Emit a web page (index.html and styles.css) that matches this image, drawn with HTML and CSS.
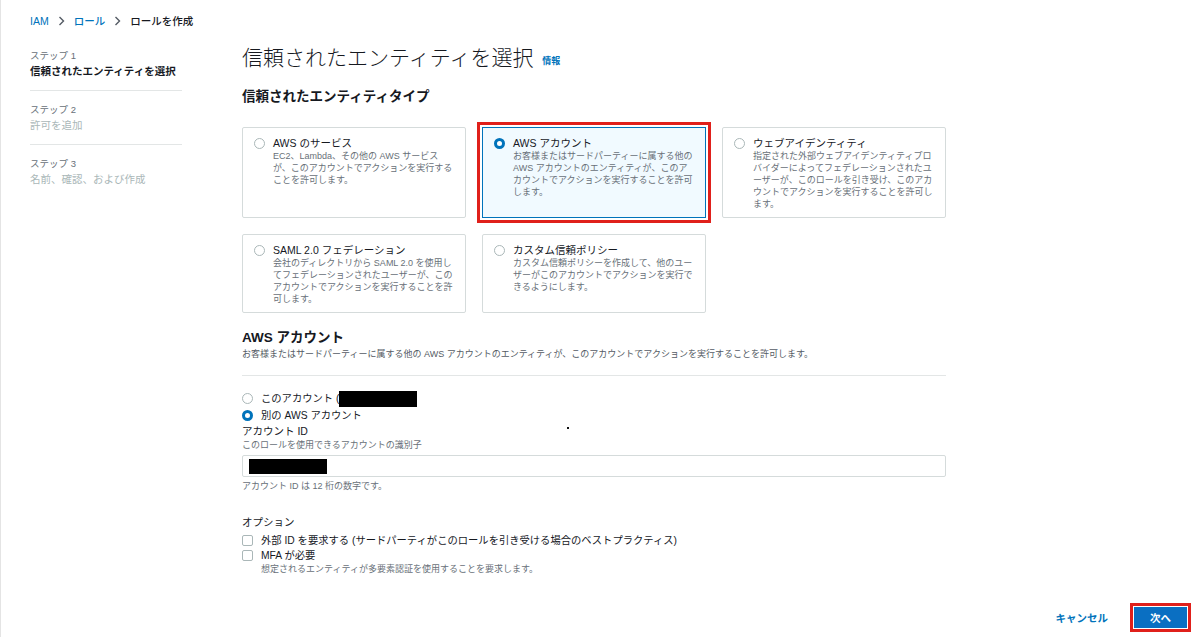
FILE: index.html
```html
<!DOCTYPE html>
<html lang="ja">
<head>
	<meta charset="utf-8">
	<meta name="viewport" content="width=device-width, initial-scale=1.0">
	<title>ロールを作成 | IAM</title>
	<link rel="stylesheet" href="styles.css">
</head>
<body>
<div class="page">
	<div class="crumbs">
		<a href="#">IAM</a>
		<svg class="chev" width="7" height="10" viewBox="0 0 7 10"><path d="M1.5 1l4 4-4 4" fill="none" stroke="#545b64" stroke-width="1.4"/></svg>
		<a href="#">ロール</a>
		<svg class="chev" width="7" height="10" viewBox="0 0 7 10"><path d="M1.5 1l4 4-4 4" fill="none" stroke="#545b64" stroke-width="1.4"/></svg>
		<span class="cur">ロールを作成</span>
	</div>

	<div class="layout">
		<ul class="steps">
			<li class="step on">
				<p class="step_no">ステップ 1</p>
				<p class="step_name">信頼されたエンティティを選択</p>
			</li>
			<li class="step">
				<p class="step_no">ステップ 2</p>
				<p class="step_name">許可を追加</p>
			</li>
			<li class="step last">
				<p class="step_no">ステップ 3</p>
				<p class="step_name">名前、確認、および作成</p>
			</li>
		</ul>

		<div class="main">
			<h1 class="title">信頼されたエンティティを選択 <a href="#" class="info">情報</a></h1>
			<h2 class="sub_title">信頼されたエンティティタイプ</h2>

			<div class="tiles">
				<div class="tile">
					<span class="radio"></span>
					<div class="tile_body">
						<p class="tile_name">AWS のサービス</p>
						<p class="tile_desc">EC2、Lambda、その他の AWS サービス<br>が、このアカウントでアクションを実行する<br>ことを許可します。</p>
					</div>
				</div>
				<div class="tile sel">
					<span class="radio on"></span>
					<div class="tile_body">
						<p class="tile_name">AWS アカウント</p>
						<p class="tile_desc">お客様またはサードパーティーに属する他の<br>AWS アカウントのエンティティが、このア<br>カウントでアクションを実行することを許可<br>します。</p>
					</div>
				</div>
				<div class="tile">
					<span class="radio"></span>
					<div class="tile_body">
						<p class="tile_name">ウェブアイデンティティ</p>
						<p class="tile_desc">指定された外部ウェブアイデンティティプロ<br>バイダーによってフェデレーションされたユ<br>ーザーが、このロールを引き受け、このアカ<br>ウントでアクションを実行することを許可し<br>ます。</p>
					</div>
				</div>
				<div class="tile">
					<span class="radio"></span>
					<div class="tile_body">
						<p class="tile_name">SAML 2.0 フェデレーション</p>
						<p class="tile_desc">会社のディレクトリから SAML 2.0 を使用し<br>てフェデレーションされたユーザーが、この<br>アカウントでアクションを実行することを許<br>可します。</p>
					</div>
				</div>
				<div class="tile">
					<span class="radio"></span>
					<div class="tile_body">
						<p class="tile_name">カスタム信頼ポリシー</p>
						<p class="tile_desc">カスタム信頼ポリシーを作成して、他のユー<br>ザーがこのアカウントでアクションを実行で<br>きるようにします。</p>
					</div>
				</div>
			</div>

			<div class="acct">
				<h2 class="acct_title">AWS アカウント</h2>
				<p class="acct_desc">お客様またはサードパーティーに属する他の AWS アカウントのエンティティが、このアカウントでアクションを実行することを許可します。</p>
			</div>

			<div class="opts">
				<label class="opt"><span class="radio"></span>このアカウント (<span class="mask"></span></label>
				<label class="opt"><span class="radio on"></span>別の AWS アカウント</label>
				<p class="field_label">アカウント ID</p>
				<p class="field_desc">このロールを使用できるアカウントの識別子</p>
				<div class="input"><span class="mask in"></span></div>
				<p class="field_hint">アカウント ID は 12 桁の数字です。</p>

				<p class="field_label opt_head">オプション</p>
				<label class="opt chk_row"><span class="chk"></span>外部 ID を要求する (サードパーティがこのロールを引き受ける場合のベストプラクティス)</label>
				<label class="opt chk_row"><span class="chk"></span>MFA が必要</label>
				<p class="field_hint indent">想定されるエンティティが多要素認証を使用することを要求します。</p>
			</div>
		</div>
	</div>

	<div class="foot">
		<a href="#" class="cancel">キャンセル</a>
		<button type="button" class="btn_next">次へ</button>
	</div>

	<span class="dot"></span>
</div>
</body>
</html>
```

FILE: styles.css
```css
*	{margin:0;padding:0;box-sizing:border-box;}
body	{font-family:"Liberation Sans", "Noto Sans CJK JP", sans-serif;font-size:11px;color:#16191f;background:#fff;border-left:1px solid #e4e4e4;}
a	{color:#0073bb;text-decoration:none;}
ul	{list-style:none;}

.page	{position:relative;display:flex;flex-direction:column;min-height:100vh;}

/* breadcrumb */
.crumbs	{display:flex;align-items:center;gap:9px;padding:14px 0 0 29px;line-height:14px;font-size:10.5px;}
.crumbs a	{font-weight:500;}
.crumbs .cur	{color:#16191f;font-weight:500;}
.crumbs .chev	{display:block;}

.layout	{display:flex;padding:15px 0 0 29px;}

/* steps */
.steps	{width:152px;flex:none;padding-top:6px;}
.steps .step	{padding:0 0 10px;border-bottom:1px solid #e3e6e6;}
.steps .step + .step	{padding-top:12px;}
.steps .step.last	{border-bottom:0;}
.steps .step_no	{font-size:9.5px;line-height:14px;color:#687078;}
.steps .step_name	{font-size:10.5px;line-height:17px;color:#aab7b8;white-space:nowrap;}
.steps .step.on .step_name	{color:#16191f;font-weight:700;}

/* main column */
.main	{width:704px;margin-left:60px;}
.main .title	{font-size:21px;line-height:30px;font-weight:300;color:#16191f;}
.main .title .info	{font-size:9px;font-weight:700;margin-left:3px;vertical-align:1px;}
.main .sub_title	{margin-top:11px;font-size:13.5px;line-height:20px;font-weight:700;}

.tiles	{display:grid;grid-template-columns:repeat(3, 224px);gap:16px;margin-top:20px;}
.tile	{display:flex;gap:8px;padding:8px 12px 7px 11px;border:1px solid #d5dbdb;border-radius:2px;background:#fff;}
.tile.sel	{border-color:#0073bb;border-radius:0;background:#f1faff;outline:3px solid #e0201b;outline-offset:2px;}
.tile_body	{flex:1;}
.tile_name	{font-size:10.5px;line-height:14px;font-weight:400;}
.tile_desc	{font-size:9px;line-height:12px;color:#687078;white-space:nowrap;}

.radio	{display:inline-block;flex:none;width:11px;height:11px;margin-top:1.5px;border:1px solid #aab7b8;border-radius:50%;background:#fff;}
.radio.on	{border:3.5px solid #0073bb;}

.acct	{margin-top:15px;padding-bottom:15px;border-bottom:1px solid #e3e6e6;}
.acct_title	{font-size:13.5px;line-height:20px;font-weight:700;}
.acct_desc	{font-size:9px;line-height:12px;color:#545b64;}

.opts	{padding-top:14px;}
.opt	{display:flex;align-items:center;gap:8px;font-size:10.3px;line-height:17px;}
.opt .radio	{margin-top:0;}
.mask	{display:inline-block;width:78px;height:16px;margin-left:-8px;background:#000;}
.field_label	{font-size:10.5px;line-height:15px;}
.field_desc	{font-size:9px;line-height:12px;color:#687078;}
.input	{display:flex;align-items:center;height:22px;margin-top:4px;padding-left:6px;border:1px solid #d5dbdb;border-radius:2px;}
.mask.in	{margin-left:0;height:15px;}
.field_hint	{margin-top:3px;font-size:9px;line-height:12px;color:#687078;}
.field_hint.indent	{margin-top:0;padding-left:19px;}
.opt_head	{margin-top:22px;line-height:16px;}
.chk_row	{line-height:15px;}
.chk	{display:inline-block;flex:none;width:11px;height:11px;border:1px solid #aab7b8;border-radius:2px;background:#fff;}
.opt_head + .chk_row	{margin-top:3px;}

/* footer */
.foot	{display:flex;justify-content:flex-end;align-items:center;gap:26px;margin-top:auto;padding:0 13px 9px 0;}
.foot .cancel	{font-size:10.5px;font-weight:700;}
.btn_next	{width:53px;height:21px;border:0;border-radius:0;background:#0a6fc2;color:#fff;font-family:inherit;font-size:10.5px;font-weight:700;outline:3px solid #e0201b;outline-offset:1px;}

.dot	{position:absolute;left:566px;top:427px;width:2px;height:2px;background:#111;}
```
